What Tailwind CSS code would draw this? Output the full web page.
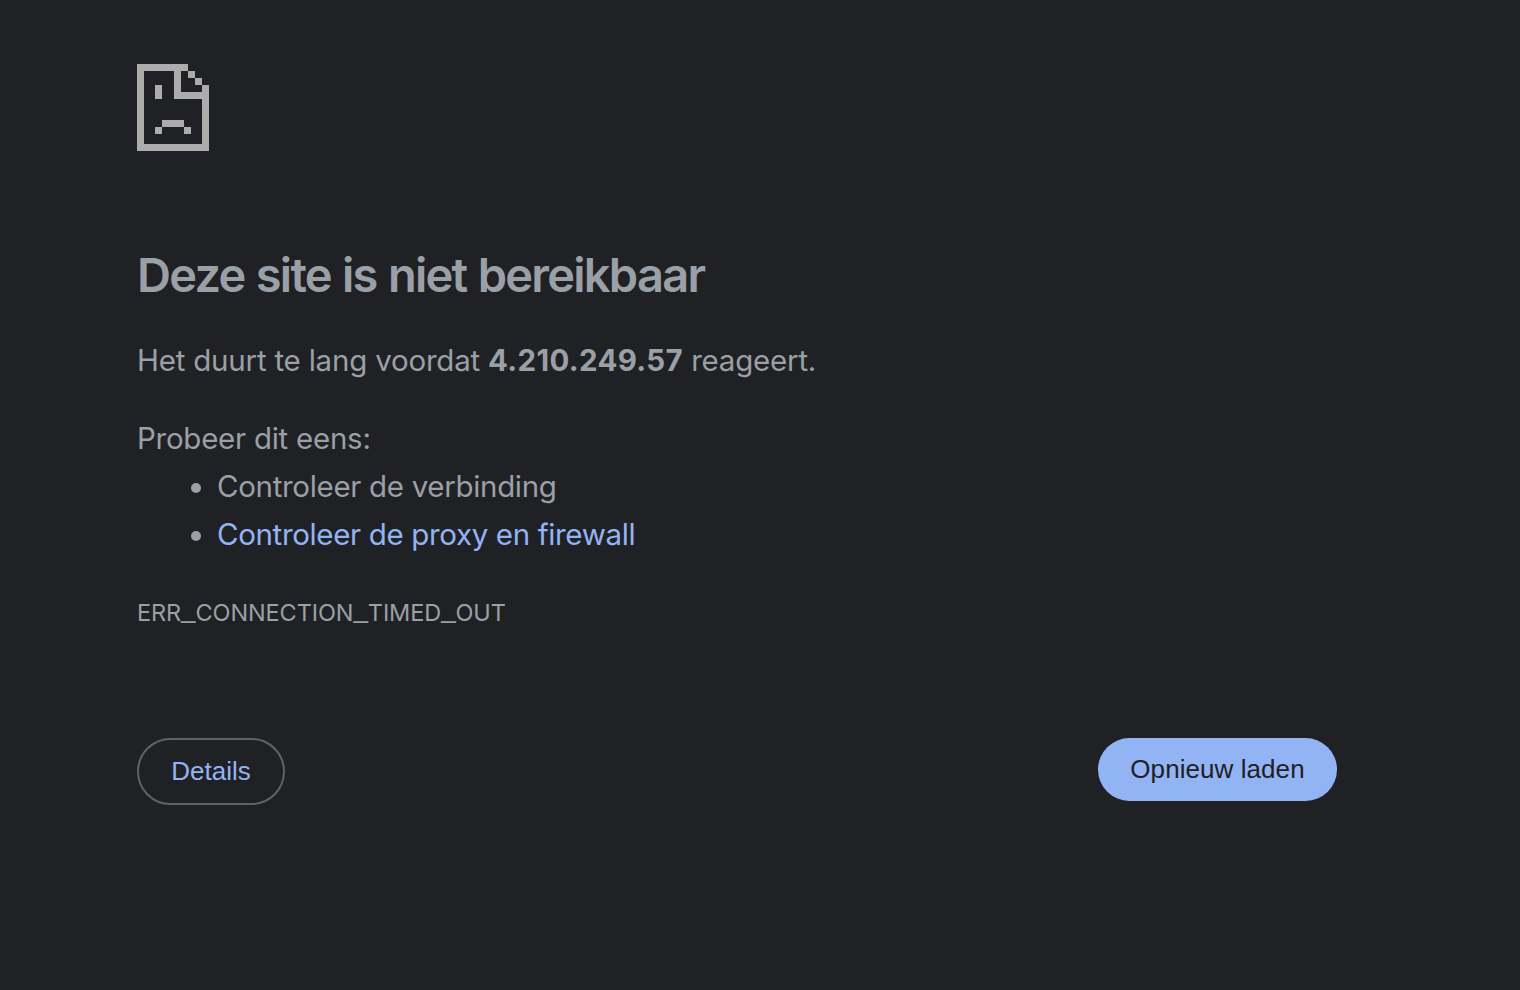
<!DOCTYPE html>
<html lang="nl">
<head>
<meta charset="utf-8">
<title>Deze site is niet bereikbaar</title>
<script src="https://cdn.jsdelivr.net/npm/@tailwindcss/browser@4"></script>
</head>
<body class="bg-[#202124] text-[#9aa0a6] font-['Inter',sans-serif] h-screen overflow-hidden">
<main class="ml-[137px] w-[1200px] pt-16">
  <svg class="block w-[72px] h-[87px]" viewBox="0 0 72 87" fill="#acacac" shape-rendering="crispEdges" aria-hidden="true">
    <path d="M0 0H51V7H44V28H65V21H72V87H0ZM7 7V80H65V35H37V7ZM51 7H58V14H51ZM58 14H65V21H58ZM18 21H25V35H18ZM25 56H47V63H25ZM18 63H25V70H18ZM47 63H54V70H47Z" fill-rule="evenodd"/>
  </svg>
  <h1 class="mt-[95px] text-[47px] leading-[58px] font-semibold tracking-[-1.73px] [word-spacing:1.1px] whitespace-nowrap">Deze site is niet bereikbaar</h1>
  <p class="mt-8 text-[29.5px] leading-[48px] tracking-[-0.21px] whitespace-nowrap">Het duurt te lang voordat <strong class="font-bold tracking-[0.33px]">4.210.249.57</strong> reageert.</p>
  <p class="mt-[30px] text-[29.5px] leading-[48px] tracking-[-0.26px]">Probeer dit eens:</p>
  <ul class="text-[29.5px] leading-[48px]">
    <li class="flex items-center pl-[54px] gap-4"><span class="size-[10px] rounded-full bg-[#9aa0a6] mt-[3px]"></span><span class="tracking-[-0.32px]">Controleer de verbinding</span></li>
    <li class="flex items-center pl-[54px] gap-4"><span class="size-[10px] rounded-full bg-[#9aa0a6] mt-[3px]"></span><a class="text-[#93b4f4] tracking-[-0.35px]">Controleer de proxy en firewall</a></li>
  </ul>
  <p class="mt-[31px] h-12 text-[23.5px] leading-[48px] tracking-[-0.1px]">ERR<span class="font-['Liberation_Sans'] text-[26px] leading-none relative -top-[3px]">_</span>CONNECTION<span class="font-['Liberation_Sans'] text-[26px] leading-none relative -top-[3px]">_</span>TIMED<span class="font-['Liberation_Sans'] text-[26px] leading-none relative -top-[3px]">_</span>OUT</p>
  <div class="mt-[101px] flex items-start justify-between font-['Liberation_Sans',sans-serif] text-[26px]">
    <button class="h-[67px] w-[148px] rounded-full border-2 border-[#5f6368] text-[#93b4f4]">Details</button>
    <button class="h-[63px] w-[239px] rounded-full bg-[#93b4f4] text-[#202124] tracking-[0.07px]">Opnieuw laden</button>
  </div>
</main>
</body>
</html>
